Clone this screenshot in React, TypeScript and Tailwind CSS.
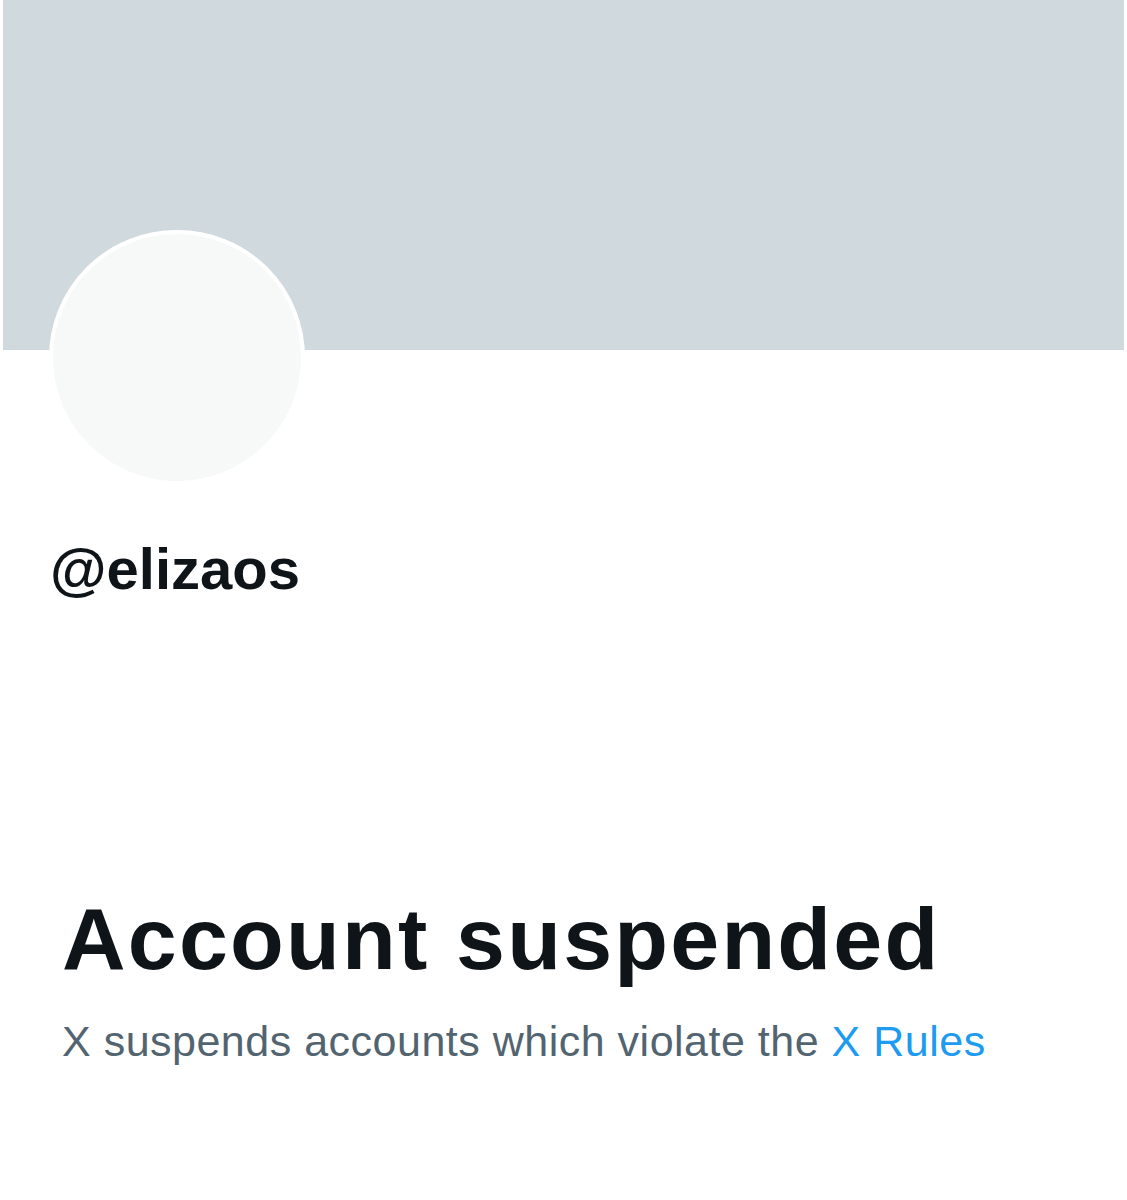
export default function App() {
  return (
    <div className="min-h-[1200px] bg-white font-['Liberation_Sans',Arial,sans-serif]">
      {/* Banner */}
      <div className="mx-[3px] h-[350px] bg-[#cfd9de]" />

      {/* Avatar */}
      <div className="-mt-[120px] ml-[49px] h-[255px] w-[256px] rounded-full border-[4px] border-white bg-[#f7f9f9]" />

      {/* Handle */}
      <div className="ml-[50px] mt-[52px] text-[58px] font-bold leading-[64px] text-[#0f1419]">
        @elizaos
      </div>

      {/* Suspended notice */}
      <div className="ml-[62px] mt-[288px]">
        <h1 className="text-[88px] font-extrabold leading-[100px] tracking-[2.2px] text-[#0f1419]">
          Account suspended
        </h1>
        <p className="mt-[28px] text-[43px] leading-[48px] tracking-[0.5px] text-[#536471]">
          X suspends accounts which violate the <span className="text-[#1d9bf0]">X Rules</span>
        </p>
      </div>
    </div>
  );
}
